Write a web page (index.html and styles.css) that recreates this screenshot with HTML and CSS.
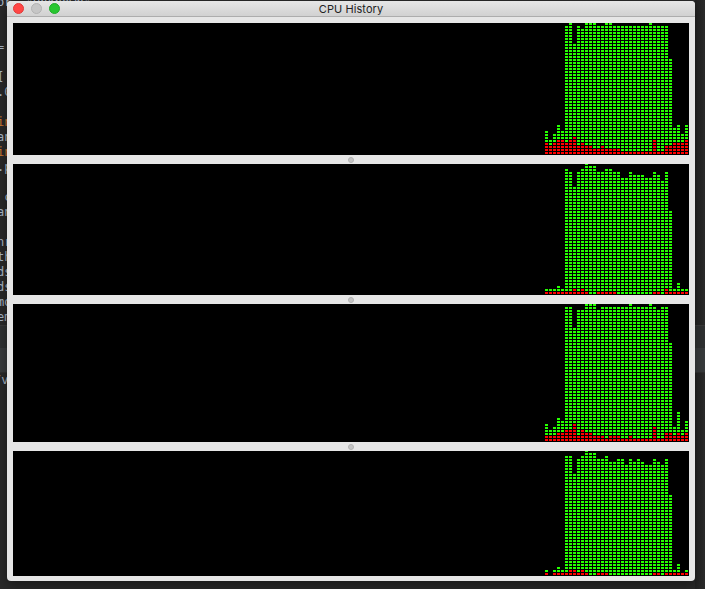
FILE: index.html
```html
<!DOCTYPE html>
<html lang="en">
<head>
<meta charset="utf-8">
<title>CPU History</title>
<link rel="stylesheet" href="styles.css">
</head>
<body>
<div class="editor">
<pre class="code">or. "Unknown"


=

[
.0

<b>in</b>
an
<b>in</b>
.p

 c
an

nr
th
ds
ds
mo
em</pre>
<div class="band"></div>
<div class="band light"></div>
<pre class="console">/v</pre>
</div>
<main class="window">
  <header class="titlebar">
    <div class="lights"><i class="close"></i><i class="minimize"></i><i class="zoom"></i></div>
    <h1>CPU History</h1>
  </header>
  <div class="content">
    <section class="graph core1"></section>
    <div class="splitter"><i></i></div>
    <section class="graph core2"></section>
    <div class="splitter"><i></i></div>
    <section class="graph core3"></section>
    <div class="splitter"><i></i></div>
    <section class="graph core4"></section>
  </div>
</main>
<script src="graphs.js"></script>
</body>
</html>
```
FILE: styles.css
```css
* { box-sizing: border-box; }
html, body { margin: 0; height: 100%; overflow: hidden; }
body { background: #292929; }
.editor {
  position: absolute;
  inset: 0;
  overflow: hidden;
  background: linear-gradient(to right, #292929 0 695px, #222 695px, #2b2b2b 705px);
}
.code, .console {
  margin: 0;
  font: 12px/15px "DejaVu Sans Mono", monospace;
  color: #a9b7c6;
}
.code { height: 330px; margin: -5px 0 0 -3px; overflow: hidden; }
.code b { font-weight: normal; color: #cc7832; }
.band { height: 23px; background: #2f3132; border-top: 1px solid #3a3a3a; }
.band.light { height: 25px; background: #383b3d; border: 0; border-bottom: 1px solid #303030; }
.console { margin-left: -6px; }
.window {
  position: relative;
  width: 688px;
  height: 580px;
  margin: 1px 0 0 7px;
  overflow: hidden;
  border-radius: 4px;
  background: #e6e6e6;
  box-shadow: 0 4px 12px rgba(0, 0, 0, .4);
}
.titlebar {
  position: relative;
  height: 16px;
  background: linear-gradient(#e6e6e6, #d1d1d1);
  border-bottom: 1px solid #adadad;
}
.titlebar h1 {
  margin: 0;
  text-align: center;
  font: 11px/16px Inter, sans-serif;
  letter-spacing: .08px;
  color: #222;
}
.lights { position: absolute; left: 6px; top: 2px; display: flex; gap: 7px; }
.lights i { width: 11px; height: 11px; border-radius: 50%; }
.close { background: #ff4645; border: 1px solid #df3a39; }
.minimize { background: #c6c6c6; border: 1px solid #b2b2b2; }
.zoom { background: #28c630; border: 1px solid #1fac29; }
.content { padding: 6px 6px 5px; display: flex; flex-direction: column; }
.graph {
  display: flex;
  align-items: flex-end;
  justify-content: flex-end;
  gap: 1px;
  padding-right: 1px;
  overflow: hidden;
  background: #000;
}
.core1 { height: 132px; }
.core2 { height: 131px; }
.core3 { height: 138px; }
.core4 { height: 125px; }
.splitter { height: 9px; display: flex; align-items: center; justify-content: center; }
.splitter i { width: 6px; height: 6px; border-radius: 50%; background: #c4c4c4; border: 1px solid #b2b2b2; }
.bar { width: 3px; flex: none; }
.user { background: repeating-linear-gradient(to top, #000 0 1px, #26ff00 1px 3px); }
.system { background: repeating-linear-gradient(to top, #000 0 1px, #ff0000 1px 3px); }
```
FILE: graphs.js
```js
// One entry per sample: total lit segments, and how many of them are system time.
const cores = {
  core1: {
    total: [8,5,7,10,8,43,44,37,43,42,44,44,44,43,43,44,44,43,43,43,43,43,43,43,43,43,44,43,43,43,43,32,9,10,7,10],
    system: [4,3,4,5,5,4,5,6,3,4,3,3,2,2,3,2,2,2,2,1,1,1,1,1,1,1,1,5,1,1,3,3,4,4,4,5]
  },
  core2: {
    total: [2,2,2,3,2,42,41,36,41,42,44,43,43,41,41,42,42,41,41,39,39,41,40,40,40,39,39,41,40,38,41,28,2,4,2,2],
    system: [1,1,1,1,1,1,1,2,1,2,1,0,0,1,1,1,1,1,0,0,0,0,0,0,0,0,0,1,1,0,2,1,1,1,1,1]
  },
  core3: {
    total: [6,4,5,8,7,45,45,38,44,44,46,46,46,44,45,45,45,45,45,45,45,46,45,45,45,45,46,45,44,45,45,33,5,10,4,7],
    system: [2,2,2,3,3,4,4,6,2,4,3,3,2,2,2,1,2,2,2,1,1,2,1,1,1,1,1,5,1,1,3,3,2,3,2,3]
  },
  core4: {
    total: [2,0,2,3,2,40,40,34,39,40,42,41,41,39,39,40,38,38,39,39,37,39,38,39,38,37,37,39,38,37,39,27,2,4,1,2],
    system: [1,0,1,1,1,1,2,2,1,2,1,0,0,1,1,1,0,0,0,0,0,0,0,0,0,0,0,1,1,0,1,1,1,1,1,1]
  }
};
for (const [name, core] of Object.entries(cores)) {
  const graph = document.querySelector('.' + name);
  core.total.forEach((total, i) => {
    const bar = document.createElement('div');
    bar.className = 'bar';
    for (const [kind, count] of [['user', total - core.system[i]], ['system', core.system[i]]]) {
      const part = document.createElement('div');
      part.className = kind;
      part.style.height = count * 3 + 'px';
      bar.append(part);
    }
    graph.append(bar);
  });
}
```
